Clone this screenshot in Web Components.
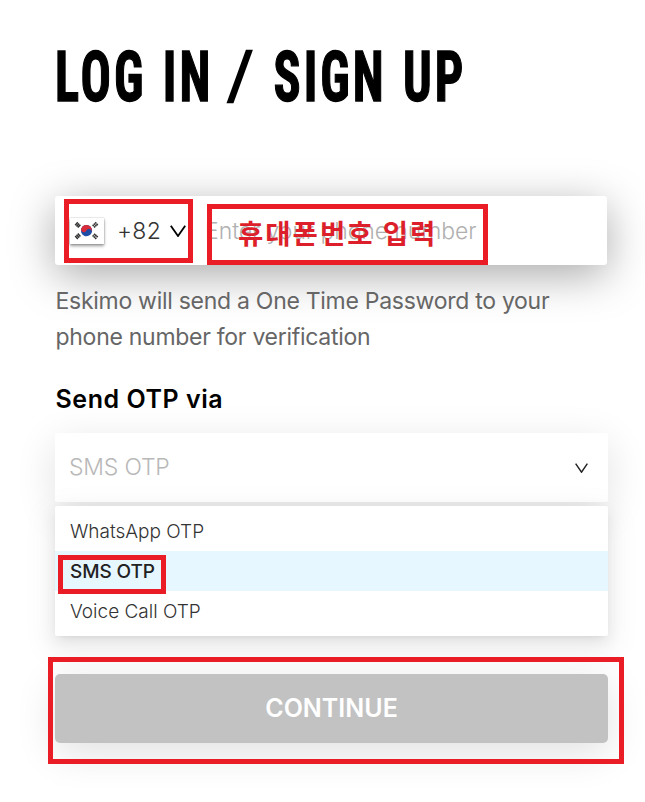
<!DOCTYPE html>
<html lang="en">
<head>
<meta charset="utf-8">
<title>Log in / Sign up</title>
<style>
  body {
    margin: 0;
    background: #fff;
    color: #000;
    font-family: Inter, "Noto Sans CJK KR", sans-serif;
  }
</style>
</head>
<body>
<login-page></login-page>

<script>
const define = (name, html) => {
  const template = document.createElement('template');
  template.innerHTML = html;
  customElements.define(name, class extends HTMLElement {
    constructor() {
      super();
      this.attachShadow({ mode: 'open' }).appendChild(template.content.cloneNode(true));
    }
  });
};

// Condensed poster type: Roboto squeezed horizontally, stems thickened back
define('page-title', `
  <style>
    :host { display: block; height: 52px; }
    h1 {
      margin: 0;
      width: max-content;
      font: 700 71px/54px Roboto, sans-serif;
      font-stretch: 75%;
      letter-spacing: 4.2px;
      word-spacing: 2.5px;
      white-space: nowrap;
      -webkit-text-stroke: 1.4px currentColor;
      transform: scaleX(.71);
      transform-origin: 0 0;
    }
    ::slotted(span) {
      display: inline-block;
      margin: 0 4px 0 7px;
      transform: skewX(-12deg) scaleY(.93);
      transform-origin: 50% 12%;
      -webkit-text-stroke-width: 2.6px;
    }
  </style>
  <h1><slot></slot></h1>
`);

define('chevron-down', `
  <style>
    :host { display: block; width: 16px; height: 12px; }
    svg { display: block; width: 100%; height: 100%; }
  </style>
  <svg viewBox="0 0 16 12" preserveAspectRatio="none" fill="none" stroke="currentColor" stroke-width="1.8">
    <path d="M.8 .7 8 11 15.2 .7"/>
  </svg>
`);

define('flag-kr', `
  <style>
    :host { display: block; width: 34px; height: 26px; background: #fff; box-shadow: 0 2px 3px #0006, 0 0 1px #0006; }
    svg { display: block; }
  </style>
  <svg width="34" height="26" viewBox="0 0 34 26">
    <g transform="translate(16.5 12.6) rotate(25)">
      <circle r="5.6" fill="#1d4da5"/>
      <path d="M-5.6 0a5.6 5.6 0 0 1 11.2 0a2.8 2.8 0 0 0-5.6 0a2.8 2.8 0 0 1-5.6 0z" fill="#d92c3b"/>
    </g>
    <g stroke="#333" stroke-width="1.5">
      <path d="M5.2 7.2 7.8 4.3M6.5 8.4 9.1 5.5M7.8 9.6 10.4 6.7"/>
      <path d="M25.2 4.3l2.6 2.9M23.9 5.5l2.6 2.9M22.6 6.7l2.6 2.9" stroke-dasharray="1.7 .4"/>
      <path d="M5.2 18l2.6 2.9M6.5 16.8l2.6 2.9M7.8 15.6l2.6 2.9"/>
      <path d="M25.2 20.9l2.6-2.9M23.9 19.7l2.6-2.9M22.6 18.5l2.6-2.9" stroke-dasharray="1.7 .4"/>
    </g>
  </svg>
`);

define('phone-field', `
  <style>
    :host {
      display: flex;
      align-items: center;
      box-sizing: border-box;
      height: 69px;
      padding-left: 15px;
      background: #fff;
      border-radius: 3px;
      box-shadow: 0 10px 44px rgba(0, 0, 0, .34);
      font-size: 23px;
    }
    .code { margin: 0 9px 0 13px; color: #333; font-weight: 300; letter-spacing: .3px; }
    .placeholder { margin-left: 19px; color: #b0b0b0; font-weight: 300; letter-spacing: -.08px; white-space: nowrap; }
  </style>
  <flag-kr></flag-kr>
  <span class="code"><slot name="code"></slot></span>
  <chevron-down></chevron-down>
  <span class="placeholder"><slot></slot></span>
`);

define('otp-select', `
  <style>
    :host {
      display: flex;
      align-items: center;
      justify-content: space-between;
      box-sizing: border-box;
      height: 69px;
      padding: 0 20px 0 14px;
      background: #fff;
      border-radius: 2px;
      box-shadow: 0 10px 40px rgba(0, 0, 0, .12);
      color: #b8b8b8;
      font-size: 23px;
      font-weight: 300;
      letter-spacing: -.2px;
    }
    span { padding-bottom: 2px; }
    chevron-down { width: 13px; height: 10px; color: #222; }
  </style>
  <span><slot></slot></span>
  <chevron-down></chevron-down>
`);

define('otp-menu', `
  <style>
    :host {
      display: block;
      padding: 5px 0;
      background: #fff;
      border-radius: 2px;
      box-shadow: 0 3px 6px -4px rgba(0, 0, 0, .12), 0 6px 16px rgba(0, 0, 0, .08), 0 9px 28px 8px rgba(0, 0, 0, .05);
    }
  </style>
  <slot></slot>
`);

define('otp-option', `
  <style>
    :host {
      display: block;
      box-sizing: border-box;
      height: 40px;
      padding: 1px 0 0 15px;
      color: #333;
      font-size: 19px;
      font-weight: 300;
      line-height: 40px;
    }
    :host([selected]) { background: #e6f7ff; color: #222; font-weight: 550; letter-spacing: -.1px; }
  </style>
  <slot></slot>
`);

define('submit-button', `
  <style>
    :host { display: block; }
    button {
      display: block;
      width: 100%;
      height: 69px;
      padding: 0 0 1px;
      border: 0;
      border-radius: 5px;
      background: #c2c2c2;
      box-shadow: 0 10px 40px rgba(0, 0, 0, .12);
      color: #fff;
      font: 600 25px Inter, sans-serif;
    }
  </style>
  <button type="button"><slot></slot></button>
`);

// Red frame laid over the form, geometry given in x / y / w / h attributes
customElements.define('mark-box', class extends HTMLElement {
  constructor() {
    super();
    this.attachShadow({ mode: 'open' }).innerHTML = `
      <style>
        :host {
          position: absolute;
          box-sizing: border-box;
          border: 5px solid #ea1c25;
          padding-left: 26px;
          color: #dd1f2b;
          font: 700 27.5px/46px "Noto Sans CJK KR", sans-serif;
          letter-spacing: 2px;
          white-space: nowrap;
        }
      </style>
      <slot></slot>
    `;
  }

  connectedCallback() {
    const px = (name) => `${this.getAttribute(name)}px`;
    this.style.left = px('x');
    this.style.top = px('y');
    this.style.width = px('w');
    this.style.height = px('h');
  }
});

define('login-page', `
  <style>
    :host {
      position: relative;
      display: block;
      box-sizing: border-box;
      width: 645px;
      height: 802px;
      padding: 50px 37px 0 55px;
      overflow: hidden;
    }
    phone-field { margin: 94px 1px 0 0; }
    p {
      margin: 18px 0 0 .5px;
      color: #666;
      font-size: 23px;
      letter-spacing: -.28px;
      line-height: 36px;
      white-space: nowrap;
    }
    h2 { margin: 29px 0 18px .5px; font-size: 25px; font-weight: 600; letter-spacing: .55px; line-height: 31px; }
    otp-menu { position: relative; margin-top: 4px; }
    submit-button { margin-top: 38px; }
  </style>
  <page-title>LOG IN <span>/</span> SIGN UP</page-title>
  <phone-field><span slot="code">+82</span>Enter your phone number</phone-field>
  <p>Eskimo will send a One Time Password to your<br>phone number for verification</p>
  <h2>Send OTP via</h2>
  <otp-select>SMS OTP</otp-select>
  <otp-menu>
    <otp-option>WhatsApp OTP</otp-option>
    <otp-option selected>SMS OTP</otp-option>
    <otp-option>Voice Call OTP</otp-option>
  </otp-menu>
  <submit-button>CONTINUE</submit-button>

  <mark-box x="64" y="199" w="129" h="64"></mark-box>
  <mark-box x="207" y="204" w="281" h="61">휴대폰번호 입력</mark-box>
  <mark-box x="58" y="555" w="108" h="39"></mark-box>
  <mark-box x="48" y="657" w="576" h="107"></mark-box>
`);
</script>
</body>
</html>
